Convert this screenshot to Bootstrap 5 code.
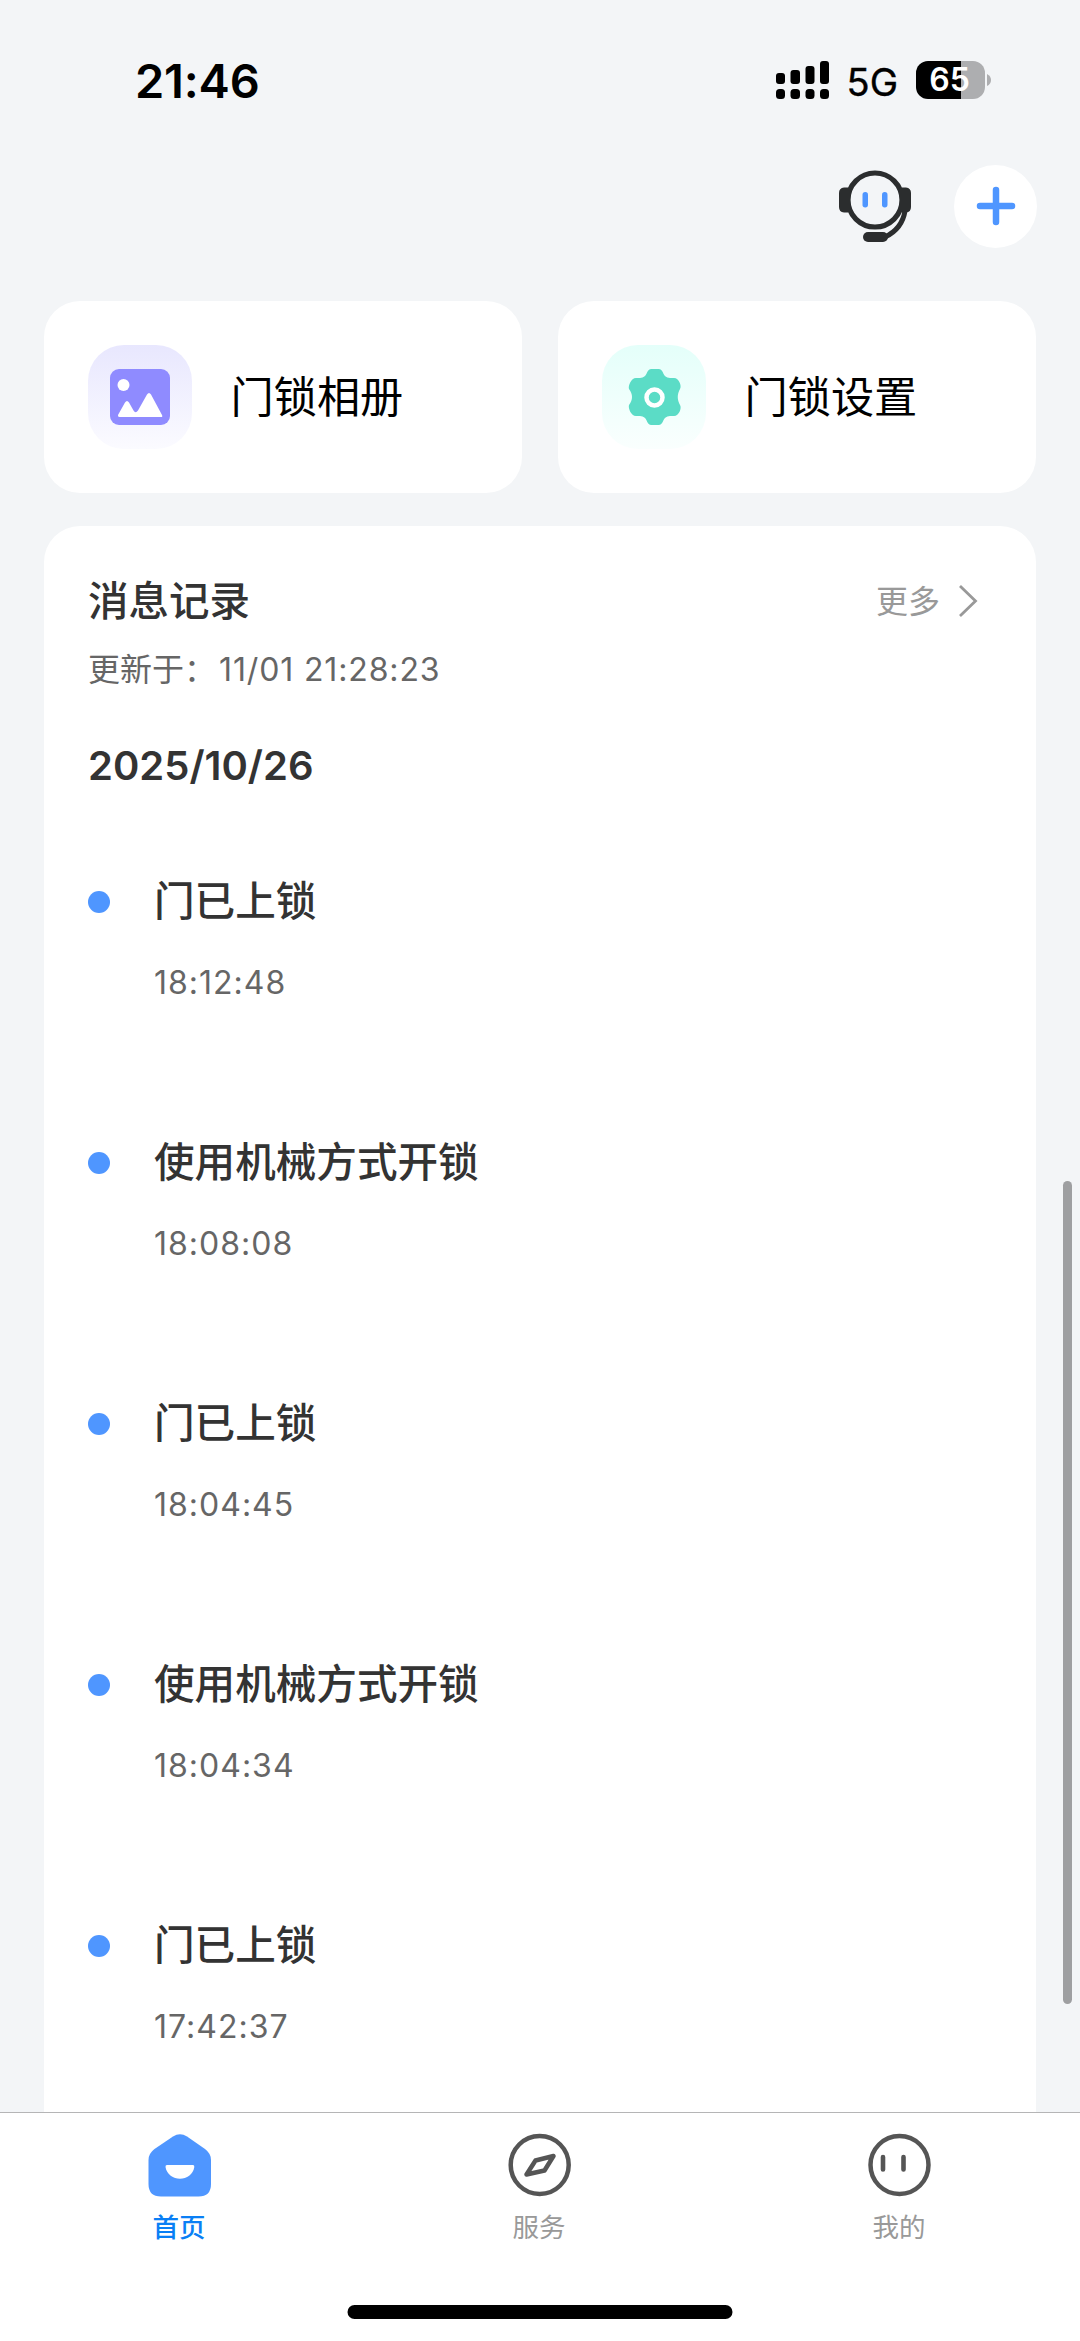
<!DOCTYPE html>
<html lang="zh-CN">
<head>
<meta charset="utf-8">
<meta name="viewport" content="width=device-width, initial-scale=1">
<title>门锁</title>
<link href="https://cdn.jsdelivr.net/npm/bootstrap@5.3.0/dist/css/bootstrap.min.css" rel="stylesheet">
<style>
body{background:#f3f5f7;font-family:Inter,"Noto Sans CJK SC",sans-serif;color:#333;font-size:32px;line-height:1}
svg{display:block;flex:none}
.screen{width:1080px;height:2341px}
.status{height:160px;padding:0 89px 0 135px}
.clock{font-size:47px;font-weight:600;color:#000;letter-spacing:-.2px}
.net{font-size:38px;font-weight:400;color:#000;margin-left:17px;padding-top:3px;-webkit-text-stroke:.4px #000}
.battery{width:69px;height:38px;border-radius:12px;background:linear-gradient(90deg,#000 45px,#adaeb0 45px);color:#fff;font-size:32px;font-weight:600;margin-left:18px;padding-right:2px}
.tools{height:92px;padding:0 43px 0 44px;gap:43px}
.add-btn{width:83px;height:83px}
.tiles{padding:49px 44px 33px;gap:36px}
.tile{height:192px;border-radius:36px;padding-left:44px;color:#000;font-size:43.2px;gap:38.5px}
.tile span{padding-top:2px}
.tile-icon{width:104px;height:104px;border-radius:36px}
.album{background:linear-gradient(#e8e7fe,#fbfbff)}
.setting{background:linear-gradient(#e4fffa,#fafffe);padding-left:2px}
.feed{margin:0 44px;border-radius:36px 36px 0 0;padding:46px 44px 0}
.feed-head{height:58px;padding-right:14px}
.feed-title{font-size:40.5px;font-weight:500;padding-top:2px}
.more{font-size:32px;color:#999;gap:18px}
.more span{padding-top:2px}
.updated{font-size:32px;color:#666;height:80px}
.updated-at{letter-spacing:.86px;margin-left:3px}
.day{font-size:40px;font-weight:600;height:111px}
.entry{height:261px;padding-top:54px}
.entry-name{font-size:40.6px;font-weight:500;height:54px;gap:44px}
.dot{width:22px;height:22px;background:#4f96ff}
.entry-time{font-size:32px;color:#666;margin-left:66px;height:107px;letter-spacing:1px}
.scroll-thumb{width:9px;height:823px;right:8px;top:1181px;background:#9e9fa1}
.tabs{height:229px;border-top:1px solid #b5b5b6}
.tab{font-size:26.5px;color:#999;padding-top:20px;gap:17px}
.tab span{margin-right:2px}
.tab.on{color:#0a7ff5;font-weight:500}
.home-bar{width:385px;height:14px;bottom:22px;background:#000}
</style>
<script src="https://cdn.jsdelivr.net/npm/bootstrap@5.3.0/dist/js/bootstrap.bundle.min.js"></script>
</head>
<body>
<div class="screen position-relative d-flex flex-column overflow-hidden">
  <header class="status d-flex align-items-center justify-content-between flex-shrink-0">
    <div class="clock">21:46</div>
    <div class="d-flex align-items-center">
      <svg width="54" height="38" viewBox="0 0 54 38"><rect y="12" width="9" height="11" rx="3"/><rect x="14.5" y="9" width="9.500" height="14" rx="3"/><rect x="29.500" y="5" width="9" height="18" rx="3"/><rect x="44" width="9" height="23" rx="3"/><rect y="28" width="9" height="10" rx="3.500"/><rect x="14.500" y="28" width="9.500" height="10" rx="3.500"/><rect x="29.500" y="28" width="9" height="10" rx="3.500"/><rect x="44" y="28" width="9" height="10" rx="3.500"/></svg>
      <div class="net">5G</div>
      <div class="battery d-flex align-items-center justify-content-center">65</div>
      <svg width="6" height="12" viewBox="0 0 6 12"><path d="M2 0Q6 2 6 6T2 12Z" fill="#adaeb0"/></svg>
    </div>
  </header>

  <div class="tools d-flex align-items-center justify-content-end flex-shrink-0">
    <svg width="72" height="76" viewBox="0 0 72 76"><circle cx="36" cy="32" r="27" fill="none" stroke="#2b2d2e" stroke-width="5.200"/><path d="M9 19.500V44.500H5Q0 44 0 39V25Q0 20 5 19.500ZM63 19.500V44.500H67Q72 44 72 39V25Q72 20 67 19.500Z" fill="#2b2d2e"/><path d="M66 43Q63 61 46 69" fill="none" stroke="#2b2d2e" stroke-width="5"/><rect x="24" y="64" width="25" height="10" rx="5" fill="#2b2d2e"/><rect x="23.500" y="24" width="5.500" height="15.500" rx="2.700" fill="#4f96ff"/><rect x="43" y="24" width="5.500" height="15.500" rx="2.700" fill="#4f96ff"/></svg>
    <div class="add-btn bg-white rounded-circle d-flex align-items-center justify-content-center">
      <svg width="40" height="40" viewBox="0 0 40 40"><path d="M4 20H36M20 4V36" stroke="#4f96ff" stroke-width="6.500" stroke-linecap="round"/></svg>
    </div>
  </div>

  <section class="tiles d-flex flex-shrink-0">
    <div class="tile bg-white d-flex align-items-center flex-fill">
      <div class="tile-icon album d-flex align-items-center justify-content-center">
        <svg width="60" height="56" viewBox="0 0 60 56"><rect width="60" height="56" rx="9" fill="#8f8bff"/><circle cx="13.500" cy="16" r="6" fill="#fff"/><path d="M8 46L15 33.500Q17 30.500 19 33.500L23.500 41.500Q25.500 45 28 41.500L37 25.500Q39 22.500 41 25.500L52 46Q53 48 51 48H9.500Q7.500 48 8 46Z" fill="#fff"/></svg>
      </div>
      <span>门锁相册</span>
    </div>
    <div class="tile bg-white d-flex align-items-center flex-fill">
      <div class="tile-icon setting d-flex align-items-center justify-content-center">
        <svg width="54" height="56" viewBox="0 0 54 56"><path d="M23 0H31C36 0 34 9 42 9H46C51 9 54 17 52 20C49 25 49 31 52 36C54 39 51 47 46 47H42C34 47 36 56 31 56H23C18 56 20 47 12 47H8C3 47 0 39 1 36C5 31 5 25 1 20C0 17 3 9 8 9H12C20 9 18 0 23 0Z" fill="#5bdcc6"/><circle cx="26.500" cy="28.500" r="8" fill="none" stroke="#fff" stroke-width="4.500"/></svg>
      </div>
      <span>门锁设置</span>
    </div>
  </section>

  <main class="feed bg-white flex-fill overflow-hidden">
    <div class="feed-head d-flex align-items-center justify-content-between">
      <div class="feed-title">消息记录</div>
      <div class="more d-flex align-items-center"><span>更多</span><svg width="20" height="34" viewBox="0 0 20 34"><path d="M2 2L17.500 17L2 32" fill="none" stroke="#999" stroke-width="2.800"/></svg></div>
    </div>
    <div class="updated d-flex align-items-center">更新于：<span class="updated-at">11/01 21:28:23</span></div>
    <div class="day d-flex align-items-center">2025/10/26</div>
    <div class="entry"><div class="entry-name d-flex align-items-center"><i class="dot rounded-circle"></i>门已上锁</div><div class="entry-time d-flex align-items-center">18:12:48</div></div>
    <div class="entry"><div class="entry-name d-flex align-items-center"><i class="dot rounded-circle"></i>使用机械方式开锁</div><div class="entry-time d-flex align-items-center">18:08:08</div></div>
    <div class="entry"><div class="entry-name d-flex align-items-center"><i class="dot rounded-circle"></i>门已上锁</div><div class="entry-time d-flex align-items-center">18:04:45</div></div>
    <div class="entry"><div class="entry-name d-flex align-items-center"><i class="dot rounded-circle"></i>使用机械方式开锁</div><div class="entry-time d-flex align-items-center">18:04:34</div></div>
    <div class="entry"><div class="entry-name d-flex align-items-center"><i class="dot rounded-circle"></i>门已上锁</div><div class="entry-time d-flex align-items-center">17:42:37</div></div>
  </main>
  <div class="scroll-thumb position-absolute rounded-pill"></div>

  <nav class="tabs bg-white row g-0 flex-shrink-0 position-relative">
    <div class="tab on col-4 d-flex flex-column align-items-center">
      <svg width="64" height="64" viewBox="0 0 64 64"><path d="M25 3.500Q32-1 39 3.500L57 16Q63 20.500 63 27V51Q63 63.500 50.500 63.500H13Q.5 63.500 .5 51V27Q.5 20.500 6.500 16Z" fill="#4f96ff"/><path d="M19 32H45Q46.500 32 46.300 34C44 49.500 20 49.500 17.500 34Q17.300 32 19 32Z" fill="#fff"/></svg>
      <span>首页</span>
    </div>
    <div class="tab col-4 d-flex flex-column align-items-center">
      <svg width="64" height="64" viewBox="0 0 64 64"><circle cx="31.700" cy="32" r="29" fill="none" stroke="#555" stroke-width="4.500"/><path d="M18.500 41.500L27.500 27.500L45.500 23L36.500 37.500Z" fill="none" stroke="#555" stroke-width="4.500" stroke-linejoin="round"/></svg>
      <span>服务</span>
    </div>
    <div class="tab col-4 d-flex flex-column align-items-center">
      <svg width="64" height="64" viewBox="0 0 64 64"><circle cx="31.500" cy="32" r="29" fill="none" stroke="#555" stroke-width="4.500"/><path d="M15 24V36.500M35.500 24V36.500" stroke="#555" stroke-width="4.600" stroke-linecap="round"/></svg>
      <span>我的</span>
    </div>
    <div class="home-bar position-absolute start-50 translate-middle-x rounded-pill"></div>
  </nav>
</div>
</body>
</html>
